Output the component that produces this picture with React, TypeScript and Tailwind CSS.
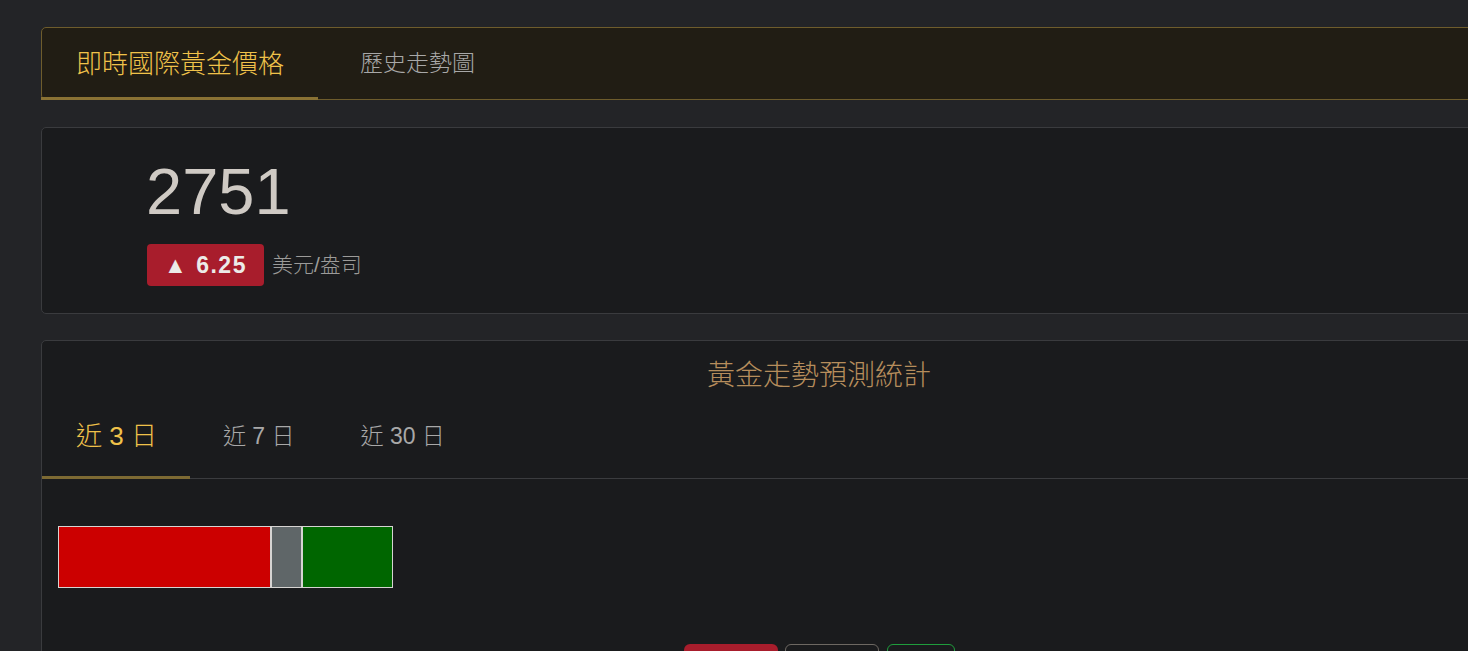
import React from "react";

const FONT = { fontFamily: '"Liberation Sans", "Noto Sans CJK TC", sans-serif' };

export default function App() {
  return (
    <div className="w-[1468px] h-[651px] overflow-hidden bg-[#232427] font-light" style={FONT}>
      <div className="pt-[27px] pl-[41px] flex flex-col w-[1597px]">
        {/* Card 1: top tabs */}
        <div className="h-[73px] border border-[#6e5c2c] rounded-l-[5px] bg-[#211d14] flex items-stretch">
          <div className="relative flex items-center px-[34px] text-[26px] text-[#f0c24a] leading-none">
            即時國際黃金價格
            <div className="absolute left-[-1px] right-0 bottom-[-1px] h-[3px] bg-[#8a7234]" />
          </div>
          <div className="flex items-center pl-[42px] text-[23px] text-[#a8a8a8] leading-none">
            歷史走勢圖
          </div>
        </div>

        {/* Card 2: price */}
        <div className="mt-[27px] h-[187px] border border-[#3a3b3e] rounded-l-[5px] bg-[#1a1b1d] pl-[104px] pt-[31px]">
          <div className="text-[65px] leading-none text-[#cfcac4] font-normal">2751</div>
          <div className="mt-[20px] flex items-center gap-[8px]">
            <div className="ml-[1px] h-[42px] px-[17px] rounded-[4px] bg-[#a81d2c] flex items-center text-[23px] font-bold text-[#ecebe8] tracking-[1.5px]">
              ▲ 6.25
            </div>
            <div className="text-[21px] text-[#9c9b99]">美元/盎司</div>
          </div>
        </div>

        {/* Card 3: statistics */}
        <div className="mt-[26px] border border-[#3a3b3e] rounded-l-[5px] bg-[#1a1b1d] h-[400px]">
          <div className="mt-[17px] h-[36px] flex items-center justify-center text-[28px] text-[#b68d5c] leading-none">
            黃金走勢預測統計
          </div>
          <div className="h-[85px] flex items-stretch border-b border-[#3b3c3f]">
            <div className="relative flex items-center pl-[34px] pr-[33px] text-[26px] text-[#f0c24a] leading-none">
              近 3 日
              <div className="absolute left-0 right-0 bottom-[-1px] h-[3px] bg-[#7d6a33]" />
            </div>
            <div className="flex items-center pl-[33px] pr-[33px] text-[23px] text-[#a8a8a8] leading-none">近 7 日</div>
            <div className="flex items-center px-[33px] text-[23px] text-[#a8a8a8] leading-none">近 30 日</div>
          </div>
          <div className="pl-[16px] pt-[47px]">
            <div className="w-[335px] h-[62px] border border-[#d6d4d2] flex">
              <div className="w-[211px] bg-[#cc0000]" />
              <div className="w-[2px] bg-[#d6d4d2]" />
              <div className="w-[29px] bg-[#5f6668]" />
              <div className="w-[2px] bg-[#d6d4d2]" />
              <div className="flex-1 bg-[#006600]" />
            </div>
          </div>
          <div className="mt-[56px] flex justify-center gap-[7px]">
            <div className="w-[94px] h-[38px] rounded-[6px] bg-[#a81d2c]" />
            <div className="w-[94px] h-[38px] rounded-[6px] border border-[#6d6862]" />
            <div className="ml-[1px] w-[68px] h-[38px] rounded-[6px] border border-[#1f9d3c]" />
          </div>
        </div>
      </div>
    </div>
  );
}
